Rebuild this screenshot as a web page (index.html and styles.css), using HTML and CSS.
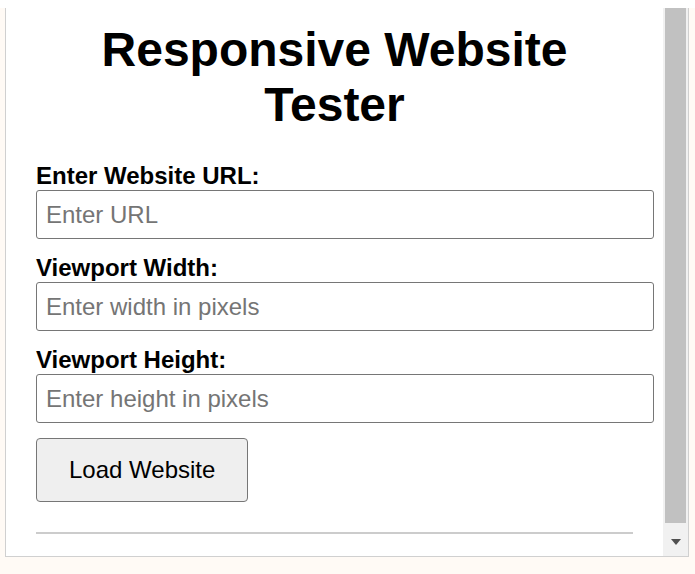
FILE: index.html
```html
<!DOCTYPE html>
<html lang="en">
<head>
    <meta charset="UTF-8">
    <meta name="viewport" content="width=device-width, initial-scale=1.0">
    <title>Responsive Website Tester</title>
    <link rel="stylesheet" href="styles.css">
</head>
<body>
    <!-- Tester panel with its scrollbar -->
    <div class="frame">
        <div class="panel">
            <h1>Responsive Website Tester</h1>

            <label for="url">Enter Website URL:</label>
            <input type="text" id="url" placeholder="Enter URL">

            <label for="width">Viewport Width:</label>
            <input type="number" id="width" placeholder="Enter width in pixels">

            <label for="height">Viewport Height:</label>
            <input type="number" id="height" placeholder="Enter height in pixels">

            <button type="button">Load Website</button>

            <hr>
        </div>

        <!-- Scrollbar -->
        <div class="scrollbar" aria-hidden="true">
            <div class="scroll-thumb"></div>
            <div class="scroll-arrow"></div>
        </div>
    </div>
</body>
</html>
```

FILE: styles.css
```css
html {
    background-color: #ffffff;
}

body {
    margin: 8px 0 0 0;
    padding: 0 6px 0 5px;
    min-height: calc(100vh - 8px);
    box-sizing: border-box;
    background-color: #fffaf5; /* Cream */
    font-family: "Liberation Sans", Arial, sans-serif;
    color: #000;
}

.frame {
    display: flex;
    height: 549px;
    box-sizing: border-box;
    background-color: #fff;
    border: 1px solid #d0d0d0;
    border-top: none;
}

.panel {
    flex: 1;
    min-width: 0;
    padding: 14px 30px 30px 30px;
    overflow: hidden;
}

/* Scrollbar */
.scrollbar {
    display: flex;
    flex-direction: column;
    width: 25px;
    background-color: #f1f1f1;
}

.scroll-thumb {
    height: 515px;
    margin: 0 2px;
    background-color: #c1c1c1;
}

.scroll-arrow {
    flex: 1;
    display: flex;
    align-items: center;
    justify-content: center;
    padding-top: 4px;
}

.scroll-arrow::before {
    content: "";
    border-left: 5.5px solid transparent;
    border-right: 5.5px solid transparent;
    border-top: 6px solid #505050;
}

h1 {
    margin: 0 0 30px 0;
    font-size: 48px;
    font-weight: bold;
    text-align: center;
}

label {
    display: block;
    font-size: 24px;
    font-weight: bold;
}

input {
    display: block;
    width: 100%;
    margin: 0 0 15px 0;
    padding: 10px 10px 9px 9px;
    border: 1px solid #767676;
    border-radius: 3px;
    font-family: inherit;
    font-size: 24px;
    color: #000;
}

input::placeholder {
    color: #757575;
}

input[type="number"] {
    -moz-appearance: textfield;
}

input[type="number"]::-webkit-inner-spin-button,
input[type="number"]::-webkit-outer-spin-button {
    -webkit-appearance: none;
    margin: 0;
}

button {
    display: block;
    margin-top: 15px;
    padding: 17px 32px;
    background-color: #efefef;
    border: 1px solid #767676;
    border-radius: 4px;
    font-family: inherit;
    font-size: 24px;
    color: #000;
}

hr {
    margin: 30px 0 0 0;
    border: none;
    border-top: 2px solid #cccccc;
}
```
